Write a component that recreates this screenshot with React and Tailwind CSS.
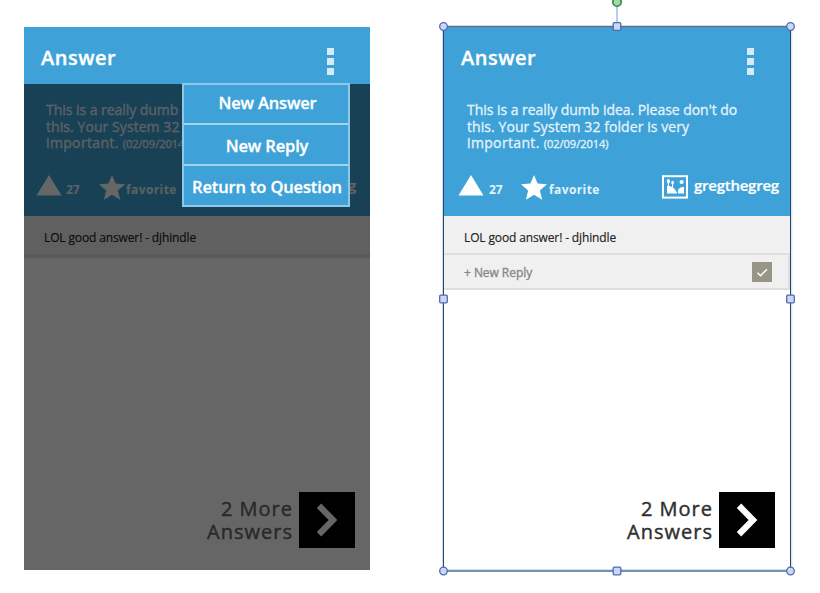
import React from "react";

const Triangle = () => (
  <svg width="26" height="21" viewBox="0 0 26 21" fill="#fff">
    <path d="M13 0L25.5 20.5H0.5z" />
  </svg>
);

const Star = () => (
  <svg width="26" height="25" viewBox="0 0 26 25" fill="#fff">
    <path d="M13 0L16.6 8.6L26 9.3L18.9 15.4L21.2 24.8L13 19.8L5 24.8L7.1 15.4L0 9.3L9.4 8.6z" />
  </svg>
);

const Picture = () => (
  <svg width="26" height="24" viewBox="0 0 26 24">
    <rect x="1" y="1.2" width="24" height="21.4" fill="none" stroke="#fff" strokeWidth="2" />
    <g fill="#fff">
      <path d="M5 18.5V11C8 10.2 13 13 15.4 18.5z" />
      <path d="M16.2 18.5Q15.5 16 16.5 14Q19 11.5 22 12V18.5z" />
      <circle cx="19.6" cy="7" r="2.1" />
      <ellipse cx="6.4" cy="6.2" rx="1.5" ry="2.2" />
      <ellipse cx="10.6" cy="7.6" rx="1.3" ry="1.9" />
      <path d="M5.9 8h1v4h-1zM10.1 9h1v4h-1z" />
    </g>
  </svg>
);

const Dots = () => (
  <div className="flex flex-col gap-[3px]">
    <i className="block size-[7px] bg-[#d5ebf7]" />
    <i className="block size-[7px] bg-[#d5ebf7]" />
    <i className="block size-[7px] bg-[#d5ebf7]" />
  </div>
);

const Screen = ({ reply, children }) => (
  <section className="relative flex h-[543px] w-[346px] shrink-0 flex-col bg-white whitespace-nowrap">
    <header className="flex h-[57px] shrink-0 justify-between bg-[#3ea2d8] pr-[36px] pl-[17px]">
      <h1 className="pt-[17px] text-[20px] leading-[28px] font-semibold tracking-[0.5px] text-white [-webkit-text-stroke:0.3px]">Answer</h1>
      <div className="pt-[21px]"><Dots /></div>
    </header>
    <div className={`flex h-[132px] shrink-0 flex-col bg-[#3ea2d8] text-[#e4f3fb] ${reply ? "" : "-indent-px"}`}>
      <div className="h-[65px] pt-[18px] pl-[23px] text-[14px] leading-[16.5px] [-webkit-text-stroke:0.3px]">
        <p className="tracking-[-0.04px]">This is a really dumb idea. Please don't do</p>
        <p className="tracking-[0.07px]">this. Your System 32 folder is very</p>
        <p className="tracking-[0.35px]">important. <span className="text-[11px] tracking-[0px]">(02/09/2014)</span></p>
      </div>
      <div className={reply ? "flex pt-[26px] pl-[14px]" : "flex pt-[26px] pl-[12px]"}>
        <div className="w-[26px]"><Triangle /></div>
        <b className="w-[37px] pt-[7px] pl-[5px] text-[12px] leading-[16px] tracking-[0px]">27</b>
        <div className="w-[26px]"><Star /></div>
        <b className="w-[115px] pt-[7px] pl-[2px] text-[12px] leading-[16px] tracking-[0.4px]">favorite</b>
        <Picture />
        <span className="pl-[6px] text-[15px] leading-[20px] font-semibold tracking-[-0.25px] text-white [-webkit-text-stroke:0.2px]">gregthegreg</span>
      </div>
    </div>
    <div className={`shrink-0 border-[#dfdfdf] bg-[#f0f0f0] pl-[20px] text-[12px] leading-[43px] tracking-[-0.13px] text-[#222] [-webkit-text-stroke:0.15px] ${reply ? "h-[39px] border-b-2" : "h-[42px] border-b-4"}`}>LOL good answer! - djhindle</div>
    {reply && (
      <div className="flex h-[35px] shrink-0 items-center justify-between border-r-2 border-b-2 border-[#dfdfdf] bg-[#f0f0f0] pr-[16px] pl-[20px] text-[12px] text-[#858585]">
        <span className="pt-[2px] tracking-[-0.05px] [-webkit-text-stroke:0.3px]">+ New Reply</span>
        <svg width="20" height="20" viewBox="0 0 20 20">
          <rect width="20" height="20" fill="#979588" />
          <path d="M5.5 10.8L8.5 13.7L15 7.2" fill="none" stroke="#fff" strokeWidth="1.5" />
        </svg>
      </div>
    )}
    <div className={`mt-auto flex justify-end pr-[15px] pb-[22px] ${reply ? "text-[#2e2e2e]" : "text-[#666]"}`}>
      <p className="pt-[6px] pr-[6px] text-right text-[20px] leading-[22.5px] tracking-[1px] [-webkit-text-stroke:0.4px]">2 More<br />Answers</p>
      <svg width="56" height="56" viewBox="0 0 56 56">
        <rect width="56" height="56" fill="#000" />
        <path d="M20 13.8L34 28L20 42.2" fill="none" stroke="#fff" strokeWidth="6.2" />
      </svg>
    </div>
    {children}
  </section>
);

const Menu = () => (
  <>
    <div className="absolute inset-x-0 top-[57px] bottom-0 bg-black/60" />
    <nav className="absolute top-[56px] left-[158px] flex h-[124px] w-[168px] flex-col divide-y-2 divide-[#a5d3ec] border-2 border-[#8ec8e8] bg-[#3ea2d8] text-center text-[16.5px] font-semibold tracking-[-0.15px] text-white [-webkit-text-stroke:0.3px]">
      <a className="h-[40px] pt-[6px] pl-[3px] leading-[24px]">New Answer</a>
      <a className="h-[41px] pt-[9px] pl-[2px] leading-[24px]">New Reply</a>
      <a className="h-[39px] pt-[9px] pl-[2px] leading-[24px]">Return to Question</a>
    </nav>
  </>
);

const handles = [
  [7.5, 7.5, true], [181, 7.5, false], [354.5, 7.5, true],
  [7.5, 280, false], [354.5, 280, false],
  [7.5, 552, true], [181, 552, false], [354.5, 552, true],
];

const Selection = () => (
  <svg className="absolute -top-[27px] -left-[8px]" width="362" height="590" viewBox="0 -19 362 590">
    <path d="M181 -16V7" stroke="#b9cdf0" strokeWidth="2" />
    <circle cx="181" cy="-17" r="4.2" fill="#a5d9a8" stroke="#2f8540" strokeWidth="1.6" />
    <path d="M7.5 7.5H354.5" stroke="#5b6f86" strokeWidth="1.6" />
    <path d="M6.5 8V552M355.8 8V552M7.5 550.6H354" stroke="#c9dcf2" strokeWidth="1" />
    <path d="M7.5 7.5V552M354.5 7.5V552" stroke="#2c4468" strokeWidth="1" />
    <path d="M7.5 552H354.5" stroke="#7391b3" strokeWidth="2" />
    {handles.map(([x, y, round], i) => (
      <rect key={i} x={x - 3.8} y={y - 3.8} width="7.6" height="7.6" rx={round ? 3.8 : 1} fill="#cbd9ef" stroke="#5068b8" strokeWidth="1.3" />
    ))}
  </svg>
);

export default function App() {
  return (
    <main className="flex h-[593px] w-[820px] gap-[74px] overflow-hidden bg-white pt-[27px] pl-[24px] font-['Open_Sans','Noto_Sans',sans-serif]">
      <Screen><Menu /></Screen>
      <Screen reply><Selection /></Screen>
    </main>
  );
}
